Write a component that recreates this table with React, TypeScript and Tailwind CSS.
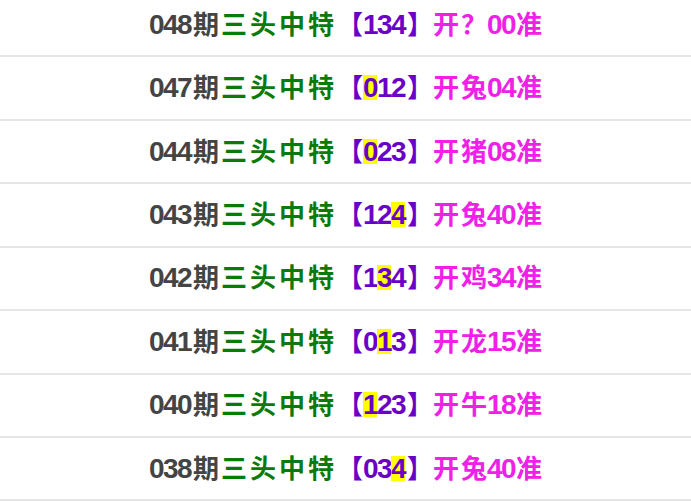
const rows = [
  { no: "048", nums: "134", hit: -1, zodiac: "？", num: "00" },
  { no: "047", nums: "012", hit: 0, zodiac: "兔", num: "04" },
  { no: "044", nums: "023", hit: 0, zodiac: "猪", num: "08" },
  { no: "043", nums: "124", hit: 2, zodiac: "兔", num: "40" },
  { no: "042", nums: "134", hit: 1, zodiac: "鸡", num: "34" },
  { no: "041", nums: "013", hit: 1, zodiac: "龙", num: "15" },
  { no: "040", nums: "123", hit: 0, zodiac: "牛", num: "18" },
  { no: "038", nums: "034", hit: 2, zodiac: "兔", num: "40" },
];

// tall, tight digits
const digitFont = { fontFamily: '"Liberation Sans", sans-serif' };
const digitCls = "text-[28px] tracking-[-1.6px] leading-[25px]";

export default function App() {
  return (
    <div className="h-[501px] overflow-hidden bg-white">
      <div
        className="-mt-[6px]"
        style={{ fontFamily: '"Noto Sans CJK SC", "Liberation Sans", sans-serif' }}
      >
        {rows.map((r) => (
          <div
            key={r.no}
            className="h-[63.43px] pb-[3px] flex items-center justify-center border-b-2 border-[#e6e6e6] font-bold whitespace-nowrap"
          >
            <div className="flex items-baseline leading-none text-[26px]">
              <span className={"text-[#444444] " + digitCls} style={digitFont}>
                {r.no}
              </span>
              <span className="text-[#444444] ml-[2px] mr-[2px]">期</span>
              <span className="text-[#0a7a0a] tracking-[3px]">三头中特</span>
              <span className="text-[#6a00c8]">【</span>
              {r.nums.split("").map((d, i) => (
                <span
                  key={i}
                  className={
                    "text-[#6a00c8] " + digitCls + (i === r.hit ? " bg-[#ffff00]" : "")
                  }
                  style={digitFont}
                >
                  {d}
                </span>
              ))}
              <span className="text-[#6a00c8] ml-[2px]">】</span>
              <span className="text-[#f020e8]">开</span>
              <span className="text-[#f020e8] ml-[2px]">{r.zodiac}</span>
              <span className={"text-[#f020e8] " + digitCls} style={digitFont}>
                {r.num}
              </span>
              <span className="text-[#f020e8] ml-[1px]">准</span>
            </div>
          </div>
        ))}
      </div>
    </div>
  );
}
